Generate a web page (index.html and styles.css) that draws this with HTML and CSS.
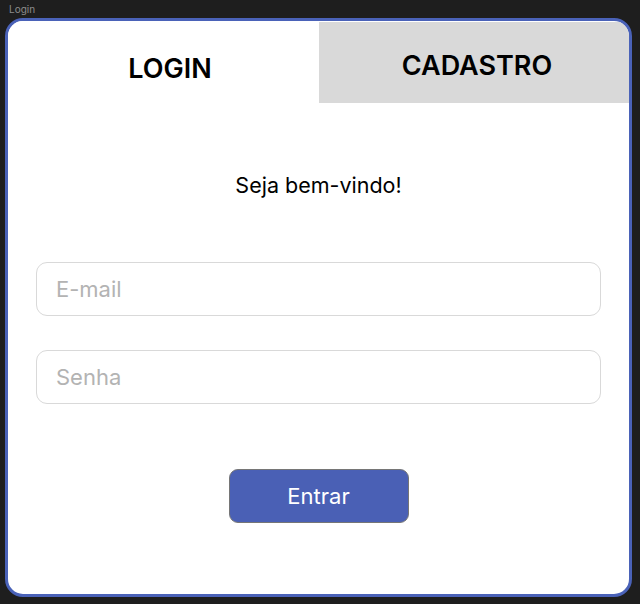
FILE: index.html
```html
<!DOCTYPE html>
<html lang="pt">
<head>
<meta charset="utf-8">
<title>Login</title>
<link rel="stylesheet" href="styles.css">
</head>
<body>
<div class="frame-label">Login</div>
<div class="card">
  <div class="tabs">
    <div class="tab tab-active"><span class="tab-login">LOGIN</span></div>
    <div class="tab tab-inactive"><span class="tab-cadastro">CADASTRO</span></div>
  </div>
  <div class="content">
    <p class="welcome">Seja bem-vindo!</p>
    <div class="field"><input class="input" type="email" placeholder="E-mail"></div>
    <div class="field"><input class="input" type="password" placeholder="Senha"></div>
    <div class="actions"><button class="btn">Entrar</button></div>
  </div>
</div>
</body>
</html>
```
FILE: styles.css
```css
* { box-sizing: border-box; }
html, body {
  margin: 0;
  padding: 0;
  background: #1e1e1e;
  font-family: Inter, "Noto Sans", sans-serif;
}
.frame-label {
  height: 18px;
  padding: 3px 0 0 9px;
  font-size: 10px;
  line-height: 12px;
  color: #8c8c8c;
}
.card {
  margin-left: 5px;
  width: 627px;
  height: 579px;
  border: 3px solid #4a62b8;
  border-radius: 18px;
  background: #ffffff;
  overflow: hidden;
  display: flex;
  flex-direction: column;
}
.tabs {
  display: grid;
  grid-template-columns: 311px 1fr;
  height: 82px;
}
.tab {
  display: flex;
  justify-content: center;
  font-weight: 600;
  font-size: 27px;
  color: #000;
}
.tab-active {
  background: #ffffff;
  padding-top: 32px;
  padding-left: 13px;
}
.tab-inactive {
  background: #d9d9d9;
  margin-top: 1px;
  padding-top: 28px;
  padding-left: 6px;
}
.tab-login, .tab-cadastro {
  line-height: 32px;
}
.content {
  padding: 0 28px;
  display: flex;
  flex-direction: column;
}
.welcome {
  margin: 67px 0 0;
  text-align: center;
  font-size: 21.5px;
  line-height: 30px;
  color: #000;
}
.field:first-of-type {
  margin-top: 62px;
}
.field + .field {
  margin-top: 34px;
}
.input {
  display: block;
  width: 100%;
  height: 54px;
  border: 1.5px solid #d9d9d9;
  border-radius: 11px;
  padding: 0 19px;
  font-family: inherit;
  font-size: 22px;
  color: #000;
  background: #fff;
  outline: none;
}
.input::placeholder {
  color: #b3b3b3;
}
.actions {
  display: flex;
  justify-content: center;
  margin-top: 65px;
}
.btn {
  width: 180px;
  height: 54px;
  background: #4a60b5;
  border: 1px solid #767676;
  border-radius: 9px;
  color: #fff;
  font-family: inherit;
  font-size: 22px;
  cursor: pointer;
}
```
